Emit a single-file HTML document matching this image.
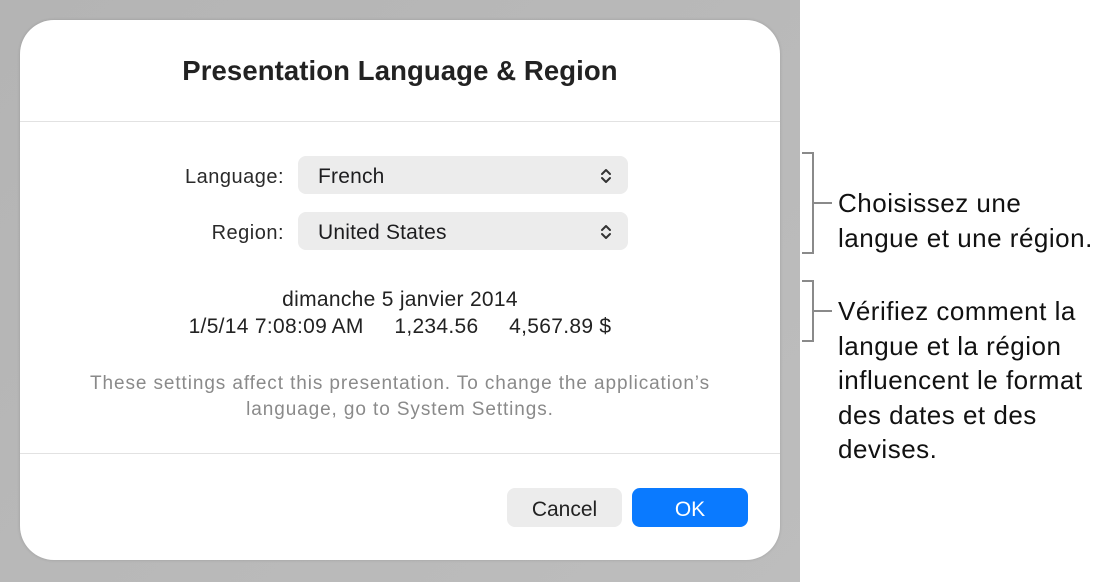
<!DOCTYPE html>
<html><head><meta charset="utf-8"><style>
*{margin:0;padding:0;box-sizing:border-box}
body{width:1116px;height:582px;background:#fff;position:relative;overflow:hidden;font-family:"Liberation Sans",sans-serif;color:#1d1d1f}
.bg{position:absolute;left:0;top:0;width:800px;height:582px;background:linear-gradient(135deg,#b4b4b4,#bdbdbd)}
.dlg{position:absolute;left:20px;top:20px;width:760px;height:540px;background:#fff;border-radius:34px;box-shadow:0 0 3px rgba(0,0,0,.15)}
.a{position:absolute;white-space:nowrap}
.hr{position:absolute;left:20px;width:760px;height:1px;background:#e2e2e2}
.pop{position:absolute;left:298px;width:330px;height:38px;background:#ececec;border-radius:8px;font-size:21px;line-height:42px;padding-left:20px;letter-spacing:0.2px}
.lbl{position:absolute;right:832px;font-size:20px;line-height:42px;color:#2a2a2a;letter-spacing:0.5px}
.btn{position:absolute;top:488px;height:39px;border-radius:8px;font-size:21px;line-height:43px;text-align:center}
.side{position:absolute;left:838px;font-size:26px;line-height:34.5px;color:#111;letter-spacing:0.5px}
</style></head><body>
<div class="bg"></div>
<div class="dlg"></div>
<div class="a" style="left:0;width:800px;text-align:center;top:55px;font-size:27.5px;font-weight:bold;color:#222;letter-spacing:0.1px">Presentation Language &amp; Region</div>
<div class="hr" style="top:121px"></div>
<div class="lbl" style="top:156px">Language:</div>
<div class="pop" style="top:156px">French</div>
<div class="lbl" style="top:212px">Region:</div>
<div class="pop" style="top:212px">United States</div>
<svg class="a" style="left:598px;top:166px" width="16" height="20"><path d="M4 8 L8 4 L12 8 M4 12 L8 16 L12 12" fill="none" stroke="#333" stroke-width="2" stroke-linecap="round" stroke-linejoin="round"/></svg>
<svg class="a" style="left:598px;top:222px" width="16" height="20"><path d="M4 8 L8 4 L12 8 M4 12 L8 16 L12 12" fill="none" stroke="#333" stroke-width="2" stroke-linecap="round" stroke-linejoin="round"/></svg>
<div class="a" style="left:0;width:800px;text-align:center;top:286px;font-size:21px;line-height:27px;color:#222;letter-spacing:0.3px">dimanche 5 janvier 2014<br>1/5/14 7:08:09&#8201;AM&nbsp;&nbsp;&nbsp;&nbsp;&nbsp;1,234.56&nbsp;&nbsp;&nbsp;&nbsp;&nbsp;4,567.89 $</div>
<div class="a" style="left:0;width:800px;text-align:center;top:371px;font-size:19px;line-height:26px;color:#8a8a8a;letter-spacing:0.9px">These settings affect this presentation. To change the application’s<br>language, go to System Settings.</div>
<div class="hr" style="top:453px"></div>
<div class="btn" style="left:507px;width:115px;background:#ececec;color:#222">Cancel</div>
<div class="btn" style="left:632px;width:116px;background:#0a7aff;color:#fff">OK</div>
<svg class="a" style="left:800px;top:150px" width="40" height="200"><path d="M2 3 H13 V103 H2 M13 53 H32 M2 131 H13 V191 H2 M13 161 H32" fill="none" stroke="#8a8a8a" stroke-width="2"/></svg>
<div class="side" style="top:186px">Choisissez une<br>langue et une région.</div>
<div class="side" style="top:294px">Vérifiez comment la<br>langue et la région<br>influencent le format<br>des dates et des<br>devises.</div>
</body></html>
